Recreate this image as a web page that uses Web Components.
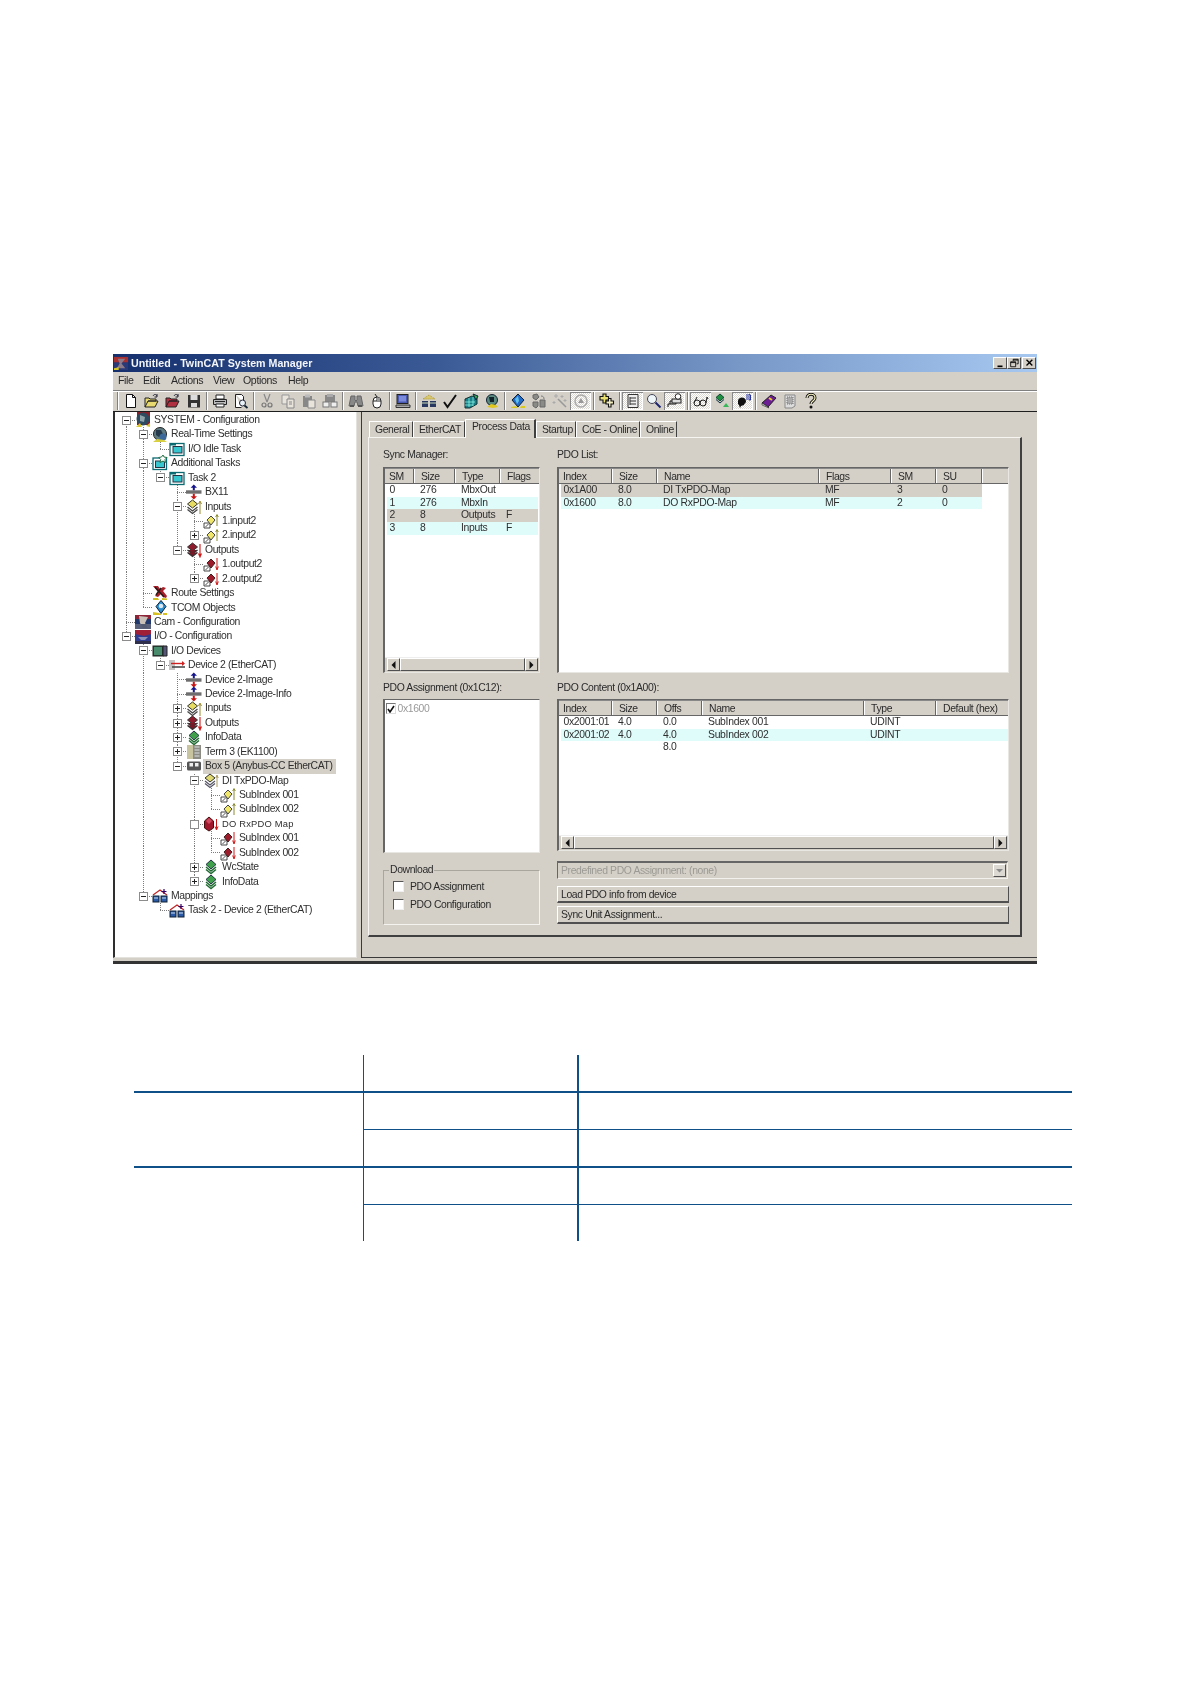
<!DOCTYPE html>
<html><head><meta charset="utf-8"><title>TwinCAT System Manager</title>
<style>
html,body{margin:0;background:#fff}
body{padding:354px 0 0 113px;font:10.4px "Liberation Sans",Arial,sans-serif;letter-spacing:-.37px;color:#2b2b2b}
</style></head><body>
<tc-window>
  <tc-tree slot="tree"></tc-tree>
  <tc-tabs slot="tabs" items="General:44,EtherCAT:52,*Process Data:71,Startup:40,CoE - Online:64,Online:37"></tc-tabs>
  <tc-panel slot="panel">
    <tc-column slot="left">
      <tc-label h="29" pb="6">Sync Manager:</tc-label>
      <tc-listview h="206" cols="29px 41px 45px 40px" rowcols="27px 41px 45px 38px" >
        <tc-lvrow cells="0|276|MbxOut|"></tc-lvrow>
        <tc-lvrow tone="cyan" cells="1|276|MbxIn|"></tc-lvrow>
        <tc-lvrow tone="grey" cells="2|8|Outputs|F"></tc-lvrow>
        <tc-lvrow tone="cyan" cells="3|8|Inputs|F"></tc-lvrow>
        <tc-hscroll slot="scroll"></tc-hscroll>
      </tc-listview>
      <tc-label h="26" pb="5">PDO Assignment (0x1C12):</tc-label>
      <tc-assign></tc-assign>
      <tc-group>
        <tc-check label="PDO Assignment"></tc-check>
        <tc-check label="PDO Configuration"></tc-check>
      </tc-group>
    </tc-column>
    <tc-column slot="right">
      <tc-label h="29" pb="6">PDO List:</tc-label>
      <tc-listview h="206" cols="53px 45px 162px 72px 45px 46px 27px" rowcols="51px 45px 162px 72px 45px 46px" head="Index|Size|Name|Flags|SM|SU|">
        <tc-lvrow tone="grey" cells="0x1A00|8.0|DI TxPDO-Map|MF|3|0"></tc-lvrow>
        <tc-lvrow tone="cyan" cells="0x1600|8.0|DO RxPDO-Map|MF|2|0"></tc-lvrow>
      </tc-listview>
      <tc-label h="26" pb="5">PDO Content (0x1A00):</tc-label>
      <tc-listview h="152" cols="53px 45px 45px 162px 72px 73px" rowcols="51px 45px 45px 162px 72px 73px" head="Index|Size|Offs|Name|Type|Default (hex)">
        <tc-lvrow cells="0x2001:01|4.0|0.0|SubIndex 001|UDINT|"></tc-lvrow>
        <tc-lvrow tone="cyan" cells="0x2001:02|4.0|4.0|SubIndex 002|UDINT|"></tc-lvrow>
        <tc-lvrow cells="||8.0|||"></tc-lvrow>
        <tc-hscroll slot="scroll"></tc-hscroll>
      </tc-listview>
      <tc-combo>Predefined PDO Assignment: (none)</tc-combo>
      <tc-button top="7" h="17">Load PDO info from device</tc-button>
      <tc-button top="3" h="18">Sync Unit Assignment...</tc-button>
    </tc-column>
  </tc-panel>
</tc-window>
<tc-bluegrid></tc-bluegrid>
<script>
const FACE='#d4d0c8';
const page='<path d="M1 10h6v5H1z" fill="#fff" stroke="#333" stroke-width=".9"/><path d="M2.500 14l3-3" stroke="#222" stroke-width=".8"/>';
const ICONS={
 sys:'<rect x="2" y="0" width="13" height="13" fill="#8a1f2a"/><circle cx="8" cy="7" r="6.500" fill="#2d4a5e"/><path d="M5 3l5 2-1 5-4-1z" fill="#8fa3ab"/><path d="M1 15l4-4 2 4zM11 14l4-3v4z" fill="#d8c832"/>',
 gear:'<circle cx="8" cy="7" r="6.500" fill="#5d7a80" stroke="#222"/><path d="M4 3h5l2 4-4 3-3-2z" fill="#253a4a"/><circle cx="11" cy="10" r="3.500" fill="#3b6a9a"/><path d="M1 15l4-3 7 1 3 2z" fill="#d8d040"/>',
 task:'<rect x="1" y="2.500" width="14" height="12" fill="#fff" stroke="#0b6a72" stroke-width="1.300"/><rect x="4" y="5.500" width="9" height="6.500" fill="#36c6d0" stroke="#234"/><path d="M1 2.500h6v2H1z" fill="#0b6a72"/>',
 addt:'<rect x="1" y="3" width="13.500" height="11.500" fill="#fff" stroke="#0b6a72" stroke-width="1.300"/><rect x="3.500" y="6" width="9" height="6.500" fill="#36c6d0" stroke="#234"/><path d="M11 0l1 2 3 .5-2 2 .5 3-2.500-1.500L8 7.500l.7-3-2-2L9.500 2z" fill="#fff" stroke="#163" stroke-width=".9"/>',
 vars:'<rect x="0" y="6.300" width="15.500" height="3.400" fill="#6e6e6e"/><path d="M7.800 .5l3.200 3.200H8.800v2.600h-2V3.700H4.600z" fill="#14148c"/><path d="M7.800 15.500l3.200-3.200H8.800V9.700h-2v2.600H4.600z" fill="#c81414"/>',
 inp:'<path d="M6.500 1l5 4-5 4-5-4z" fill="#e6dc64" stroke="#333"/><path d="M1.500 8l5 4 5-4M1.500 10.500l5 4 5-4" fill="none" stroke="#444" stroke-width="1.300"/><path d="M14 15V3M12.500 5L14 2l1.500 3" fill="none" stroke="#9a8a30" stroke-width="1"/>',
 in1:page+'<path d="M8 3l4 4-4 5-4-5z" fill="#efe66a" stroke="#444"/><path d="M14 13V2M12.700 4L14 1.500 15.300 4" fill="none" stroke="#8a8a30"/>',
 out:'<path d="M6.500 1l5 4-5 4-5-4z" fill="#8e1c2c" stroke="#333"/><path d="M1.500 8l5 4 5-4" fill="#7a1826" stroke="#333" stroke-width="1.300"/><path d="M1.500 10.500l5 4 5-4" fill="#7a1826" stroke="#333" stroke-width="1.300"/><path d="M14 2v12M12.500 11.500L14 15l1.500-3.500" fill="none" stroke="#d01818" stroke-width="1.100"/>',
 out1:page+'<path d="M8 3l4 4-4 5-4-5z" fill="#9c1c2c" stroke="#422"/><path d="M14 2v11M12.700 10.500L14 14l1.300-3.500" fill="none" stroke="#d01818"/>',
 route:'<path d="M1 1h5l2 3 3-2 3 1-3 3 4 5-1 2-3-1-2-3-3 3-3-1 3-4z" fill="#a8202a"/><path d="M3 2l9 10M9 3l-5 7" stroke="#2a1a1a" stroke-width="1.500"/><path d="M1 13h5l1 2H1zM10 13l5 .5v1.500h-5z" fill="#d0c020"/>',
 tcom:'<path d="M9 .5l5 6-5 7-5-7z" fill="#2a8ed0" stroke="#123"/><circle cx="9" cy="6" r="2.200" fill="#dfe8f0"/><path d="M1 12l6 1 3 2H1zM11 13h4v2h-4z" fill="#d8c020"/>',
 cam:'<rect x="0" y="1" width="16" height="4" fill="#8e2438"/><rect x="0" y="5" width="16" height="5" fill="#20386c"/><path d="M4 2l9 1-3 6 3 5H8L5 9z" fill="#c9c0b8"/><rect x="0" y="10" width="16" height="5" fill="#46506a" fill-opacity=".9"/>',
 io:'<rect x="0" y="1" width="16" height="14" fill="#303c90"/><path d="M0 1h16v4L9 7 0 5z" fill="#a02038"/><path d="M3 8h10l-3 3H6z" fill="#8a90b8"/><path d="M0 12h16v3H0z" fill="#30304c"/>',
 iodev:'<rect x="1" y="3" width="10" height="10" fill="#1e4e3a" stroke="#222"/><path d="M2 5h8M2 7h8M2 9h8M2 11h8" stroke="#9fc" stroke-width=".7"/><path d="M11 3h4v10h-4z" fill="#557" stroke="#222"/>',
 dev:'<rect x="0" y="3" width="6" height="10" fill="#c9c4c4"/><path d="M2 6.500h13" stroke="#d02020" stroke-width="1.400"/><path d="M13 4l3 2.500-3 2.500z" fill="#d02020"/><path d="M3 10h13" stroke="#404040" stroke-width="1.500"/>',
 green:'<path d="M8 1l5 4.500L8 10 3 5.500z" fill="#3fa04c" stroke="#234"/><path d="M3 8l5 4 5-4M3 10.500l5 4 5-4" fill="none" stroke="#1e6a30" stroke-width="1.500"/>',
 term:'<rect x="1" y="1" width="6" height="14" fill="#c8c4a0"/><rect x="7" y="1" width="8" height="14" fill="#8c8c84"/><path d="M8.500 3h5M8.500 6h5M8.500 9h5M8.500 12h5" stroke="#ddd" stroke-width="1.200"/>',
 box:'<rect x="1" y="3.500" width="14" height="9" rx="1.500" fill="#555"/><rect x="3.500" y="5" width="3.500" height="3.500" fill="#eee"/><rect x="9" y="5" width="3.500" height="3.500" fill="#eee"/>',
 dim:'<path d="M7 1l5 4-5 4-5-4z" fill="#e0d870" stroke="#333"/><path d="M2 8l5 4 5-4M2 10.500l5 4 5-4" fill="none" stroke="#556" stroke-width="1.300"/><path d="M14 14V3M12.800 5L14 2l1.200 3" fill="none" stroke="#aa9a60"/>',
 dom:'<path d="M6 1l4.500 4v7L6 15l-4.500-3V5z" fill="#a0182c" stroke="#411"/><path d="M6 2l3 3-3 3-3-3z" fill="#d04a60"/><path d="M13.500 3v10M12 10.500l1.500 3.500 1.500-3.500" fill="none" stroke="#d01818"/>',
 map:'<path d="M1 7L8 2l7 5" fill="none" stroke="#c02828" stroke-width="1.300"/><rect x="1" y="8" width="6" height="6" fill="#2a5aa8" stroke="#123"/><rect x="9" y="8" width="6" height="6" fill="#2a5aa8" stroke="#123"/><path d="M2 10h4M10 10h4" stroke="#cde" /><path d="M12 1v5M9.500 3.500h5" stroke="#306" stroke-width="1.200"/>',
 title:'<rect x="0" y="1" width="15" height="6" fill="#a83030"/><rect x="0" y="7" width="15" height="8" fill="#2a3a78"/><path d="M4 3h8L8 8l4 5H3l3-5z" fill="#8a7a8a"/><path d="M0 13l5-1v3H0z" fill="#d8c820"/>',
 new:'<path d="M3.500 1.500h6l3 3v10h-9z" fill="#fff" stroke="#111"/><path d="M9.500 1.500v3h3" fill="none" stroke="#111"/>',
 open:'<path d="M1 14V5h4l1 1h6v2H4l-3 6zm0 0h10l3-6H4" fill="#e8d870" stroke="#222"/><path d="M9 3c1-2 3-2 4 0M13 1v3h-2.500" fill="none" stroke="#223"/>',
 open2:'<path d="M1 14V5h4l1 1h6v2H4l-3 6zm0 0h10l3-6H4" fill="#b03040" stroke="#222"/><path d="M9 3c1-2 3-2 4 0M13 1v3h-2.500" fill="none" stroke="#223"/>',
 save:'<path d="M2 2h12v12.500H2z" fill="#333"/><rect x="4.500" y="2" width="7" height="5" fill="#ddd"/><rect x="5" y="10" width="6" height="4" fill="#ddd"/>',
 print:'<path d="M4 2h8v4H4z" fill="#fff" stroke="#222"/><path d="M1.500 6.500h13v5h-13z" fill="#bbb" stroke="#222"/><path d="M4 11h8v3H4z" fill="#fff" stroke="#222"/><path d="M3 8.500h10" stroke="#222"/>',
 prev:'<path d="M2.500 1.500h6l2 2V9M2.500 1.500V14.500h6" fill="#fff" stroke="#222"/><circle cx="9.500" cy="10" r="3" fill="#e8f2f6" stroke="#223"/><path d="M11.500 12.500l3 2.500" stroke="#123" stroke-width="1.800"/>',
 cut:'<path d="M5 1l3 8M11 1L8 9" stroke="#888" stroke-width="1.200" fill="none"/><circle cx="5" cy="12" r="2" fill="none" stroke="#777" stroke-width="1.200"/><circle cx="11" cy="12" r="2" fill="none" stroke="#777" stroke-width="1.200"/>',
 copy:'<path d="M2 2h7v9H2z" fill="#e8e4dc" stroke="#999"/><path d="M7 6h7v9H7z" fill="#e8e4dc" stroke="#888"/><path d="M9 9h3M9 11h3" stroke="#888"/>',
 paste:'<path d="M2 3h9v11H2z" fill="#888"/><path d="M4 1.500h5v3H4z" fill="#bbb"/><path d="M7 7h7v8H7z" fill="#e8e4dc" stroke="#888"/>',
 paste2:'<path d="M3 2h10v7H3z" fill="#888"/><path d="M5 1h6v3H5z" fill="#aaa"/><rect x="1" y="9" width="6" height="5" fill="#eee" stroke="#777"/><rect x="9" y="9" width="6" height="5" fill="#eee" stroke="#777"/>',
 bino:'<path d="M3 3h4v4l1 1 1-1V3h4l2 10H10l-1-4H7l-1 4H1z" fill="#888" stroke="#666"/><path d="M2 13h4M10 13h4" stroke="#555" stroke-width="2"/>',
 mouse:'<rect x="4" y="4" width="8" height="11" rx="4" fill="#fff" stroke="#222"/><path d="M8 4v4M4 8h8M6 1l2 3" stroke="#222" fill="none"/><path d="M8 4.500h3v3.500H8z" fill="#999"/>',
 mon:'<rect x="2" y="1.500" width="11" height="9" fill="#4a5ab0" stroke="#222"/><rect x="4" y="3" width="7" height="5.500" fill="#7c8adc"/><path d="M1 12h14v2.500H1z" fill="#aaa" stroke="#333"/>',
 conf:'<path d="M2 6l6-4 6 4z" fill="#d8c870" stroke="#b09a30" stroke-dasharray="1 1"/><rect x="1" y="8" width="6" height="6" fill="#27375f"/><rect x="9" y="8" width="6" height="6" fill="#27375f"/><path d="M1 10h6M9 10h6" stroke="#cdb" />',
 check:'<path d="M2 9l3.500 5L14 2" fill="none" stroke="#111" stroke-width="2"/>',
 cube:'<path d="M2 6l7-3 5 2v6l-7 4H2z" fill="#1a7e88" stroke="#133"/><path d="M2 9h10M2 12h8M6 5v9M10 4v9" stroke="#9fe" stroke-width=".7"/><path d="M10 1l5 2-2 4z" fill="#3a5" stroke="#123"/>',
 head:'<circle cx="8" cy="7" r="5.500" fill="#5a8a80" stroke="#123"/><path d="M5 4h5v5H6z" fill="#10222a"/><path d="M3 14l4-3 5 1 2 2-5 1z" fill="#e0c820"/>',
 dia:'<path d="M8 1l6 6-6 7-6-7z" fill="#1e6ac8" stroke="#123"/><path d="M5 6l3-3 1 5-2 3z" fill="#63c0e8"/><path d="M1 14l5-1 2 2H1zM11 13h4v2h-5z" fill="#d8c820"/>',
 gdoc:'<path d="M2 2l4-1 2 3-3 3-3-2zM9 7h5v7H9zM2 9h5v4l-2 2-3-2z" fill="#8a8a86" stroke="#666"/><path d="M10 3c2 0 3 1 3 3" stroke="#777" fill="none"/>',
 wand:'<path d="M14 14L6 6" stroke="#999" stroke-width="1.600"/><path d="M4 1v4M2 3h4M10 2v3M8.500 3.500h3M2 8v3M.5 9.500h3M13 6v3M11.500 7.500h3" stroke="#aaa" />',
 circ:'<circle cx="8" cy="8" r="6" fill="none" stroke="#aaa" stroke-width="1.500"/><path d="M5 10l3-5 3 5z" fill="#999"/>',
 plus:'<path d="M4 1h3v2.500h2.500V7H7v3H4V7H1V3.500h3z" fill="#e8e070" stroke="#111" stroke-width="1.100"/><path d="M9.500 5.500h2.500V8h2.500v3H12v3H9.500v-3H7V8h2.500z" fill="#f4f0c0" stroke="#111" stroke-width="1.100"/>',
 list:'<path d="M3 1.500h10v13H3z" fill="#eee" stroke="#333"/><path d="M5 5h6M5 8h6M5 11h6M5 4v8" stroke="#333"/>',
 find:'<circle cx="6" cy="6" r="4.500" fill="#eef6fa" stroke="#445"/><path d="M9.500 9.500l5 5" stroke="#1c2470" stroke-width="2"/>',
 conn:'<path d="M1 14v-3h2V8h6v3H3" fill="none" stroke="#111"/><rect x="5" y="6" width="9" height="4" fill="#ddd" stroke="#222"/><circle cx="11" cy="3.500" r="2.800" fill="#fff" stroke="#222"/>',
 glass:'<circle cx="4" cy="10" r="3" fill="none" stroke="#222"/><circle cx="10" cy="10" r="3" fill="none" stroke="#222"/><path d="M1 10L4 4M13 10l1-6 1 2M7 10h0" fill="none" stroke="#222"/>',
 gdi:'<path d="M6 1l4 3.500L6 8 2 4.500z" fill="#1e9040" stroke="#143"/><path d="M2 6.500l4 3.500 4-3.500" fill="none" stroke="#134" /><path d="M12 10l3 4H9z" fill="#38b858"/>',
 ear:'<path d="M3 8c0-4 7-5 8 0 0 3-2 2-2 4l-3 1-1 2-1-3-1-1z" fill="#111"/><path d="M12 1v6M14 1v6M14 1l1.500 1v5h-1.500" fill="none" stroke="#2632a0"/>',
 book:'<path d="M1 10l9-8 5 3-8 9z" fill="#6a1e92" stroke="#222"/><path d="M1 10l6 4 1 1-7-3z" fill="#ddd" stroke="#222" stroke-width=".6"/><path d="M8 5l3 2" stroke="#e8c830" stroke-width="2"/>',
 gbox:'<path d="M3 2h10v11l-3 2H3z" fill="#dcdcdc" stroke="#888"/><path d="M5 4h6v7H5z" fill="#aaa" stroke="#777" stroke-dasharray="1 1"/>',
 ques:'<path d="M4 5c0-5 8-5 8 0 0 3-4 3-4 6" fill="none" stroke="#111" stroke-width="3"/><path d="M4 5c0-5 8-5 8 0 0 3-4 3-4 6" fill="none" stroke="#f4f0c0" stroke-width="1.200"/><circle cx="8" cy="14" r="1.500" fill="#111"/>',
 min:'<path d="M3 9h6v2H3z" fill="#000"/>',
 max:'<path d="M5 1.500h6v5.500H9M5 1.500v2M5 2.500h6M2 4.500h6v6H2zM2 5.500h6" fill="none" stroke="#000"/>',
 close:'<path d="M3 2l7 7M10 2l-7 7" stroke="#000" stroke-width="1.600"/>'
};
function def(name,cls){customElements.define(name,cls)}
function shadow(el,html){const r=el.attachShadow({mode:'open'});r.innerHTML=html;return r}
const raised='border:1px solid;border-color:#fff #505050 #505050 #fff;';

def('tc-icon',class extends HTMLElement{connectedCallback(){
  const s=+this.getAttribute('size')||15,n=this.getAttribute('name');
  if(!this.shadowRoot)shadow(this,`<style>:host{display:inline-flex;width:${s}px;height:${s}px;flex:none}svg{width:100%;height:100%;display:block}</style><svg viewBox="0 0 16 16">${ICONS[n]||''}</svg>`);
}});

def('tc-window',class extends HTMLElement{constructor(){super();shadow(this,`<style>
:host{display:block;width:924px;height:610px;background:${FACE};filter:blur(.3px)}
.wrap{display:flex;flex-direction:column;height:100%}
.panes{display:flex;height:546px;flex:none}
.treebox{width:241px;flex:none;background:#fff;border-left:2px solid #2e2e2e;border-right:1px solid #e4e2dc;border-bottom:1px solid #e4e2dc;height:545px;overflow:hidden}
.rightbox{margin-left:4px;flex:1;border-left:1px solid #3a3a3a;border-bottom:1px solid #3a3a3a;box-sizing:border-box;padding:7px 0 0 6px;display:flex;flex-direction:column}
.foot{height:3px;flex:none}
.bar{height:3px;background:#333;flex:none}
</style><div class="wrap"><tc-titlebar>Untitled - TwinCAT System Manager</tc-titlebar><tc-menubar></tc-menubar><tc-toolbar></tc-toolbar>
<div class="panes"><div class="treebox"><slot name="tree"></slot></div><div class="rightbox"><slot name="tabs"></slot><slot name="panel"></slot></div></div><div class="foot"></div><div class="bar"></div></div>`)}});

def('tc-titlebar',class extends HTMLElement{constructor(){super();shadow(this,`<style>
:host{display:flex;align-items:center;height:18px;flex:none;background:linear-gradient(90deg,#16306e 0%,#3a5a96 35%,#7898c8 68%,#a6c8f0 100%);color:#fff;font:bold 10.66px "Liberation Sans",Arial,sans-serif;letter-spacing:0;box-sizing:border-box;padding:0 1px}
.t{flex:1;padding-left:2px;color:#f4f6fa;white-space:nowrap}
b{width:14px;height:12px;background:${FACE};${raised}box-sizing:border-box;display:flex;align-items:center;justify-content:center}
svg{width:12px;height:10px}
.b{display:flex}.b b:last-child{margin-left:1px}
</style><tc-icon name="title" size="15"></tc-icon><span class="t"><slot></slot></span><span class="b">
<b><svg viewBox="0 0 12 12">${ICONS.min}</svg></b><b><svg viewBox="0 0 12 12">${ICONS.max}</svg></b><b><svg viewBox="0 0 12 12">${ICONS.close}</svg></b></span>`)}});

def('tc-menubar',class extends HTMLElement{constructor(){super();
 const items=[['File',25],['Edit',28],['Actions',42],['View',30],['Options',45],['Help',30]];
 shadow(this,`<style>:host{display:flex;align-items:center;height:18px;flex:none;padding:0 0 2px 5px;box-sizing:border-box;font-size:10.600px;color:#2a2a2a}span{display:block;flex:none}</style>`+items.map(i=>`<span style="width:${i[1]}px">${i[0]}</span>`).join(''))}});

def('tc-toolbar',class extends HTMLElement{constructor(){super();
 const L='| new open open2 save | print prev | cut copy paste paste2 | bino mouse | mon | conf check cube head | dia gdoc wand circ* | plus | list* find conn* | glass* gdi ear* | book gbox ques'.split(' ');
 shadow(this,`<style>:host{display:flex;align-items:center;height:22px;flex:none;box-sizing:border-box;border-top:1px solid #808080;box-shadow:inset 0 1px 0 #fff;border-bottom:1px solid #1e1e1e;padding:1px 0 2px 2px}
 i{display:block;width:5px;height:18px;flex:none;background:linear-gradient(90deg,transparent 2px,#808080 2px,#808080 3px,#fff 3px,#fff 4px,transparent 4px)}
 span{display:flex;width:21px;height:18px;flex:none;align-items:center;justify-content:center}
 span.on{background:#eeece8 repeating-conic-gradient(#fff 0 25%,#dcd9d2 0 50%) 0 0/2px 2px;box-shadow:inset 1px 1px 0 #888,inset -1px -1px 0 #fff}
 </style>`+L.map(n=>n==='|'?'<i></i>':`<span class="${n.endsWith('*')?'on':''}"><tc-icon name="${n.replace('*','')}" size="16"></tc-icon></span>`).join(''))}});

const TREE=[
[0,'-','sys','SYSTEM - Configuration'],[1,'-','gear','Real-Time Settings'],[2,'','task','I/O Idle Task'],[1,'-','addt','Additional Tasks'],[2,'-','task','Task 2'],[3,'','vars','BX11'],[3,'-','inp','Inputs'],[4,'','in1','1.input2'],[4,'+','in1','2.input2'],[3,'-','out','Outputs'],[4,'','out1','1.output2'],[4,'+','out1','2.output2'],[1,'','route','Route Settings'],[1,'','tcom','TCOM Objects'],[0,'','cam','Cam - Configuration'],[0,'-','io','I/O - Configuration'],[1,'-','iodev','I/O Devices'],[2,'-','dev','Device 2 (EtherCAT)'],[3,'','vars','Device 2-Image'],[3,'','vars','Device 2-Image-Info'],[3,'+','inp','Inputs'],[3,'+','out','Outputs'],[3,'+','green','InfoData'],[3,'+','term','Term 3 (EK1100)'],[3,'-','box','Box 5 (Anybus-CC EtherCAT)','sel'],[4,'-','dim','DI TxPDO-Map'],[5,'','in1','SubIndex 001'],[5,'','in1','SubIndex 002'],[4,'o','dom','DO RxPDO Map','thin'],[5,'','out1','SubIndex 001'],[5,'','out1','SubIndex 002'],[4,'+','green','WcState'],[4,'+','green','InfoData'],[1,'-','map','Mappings'],[2,'','map','Task 2 - Device 2 (EtherCAT)']];
def('tc-tree',class extends HTMLElement{constructor(){super();
 const dot='repeating-linear-gradient(to bottom,#7c7c7c 0 1px,transparent 1px 2px)';
 const hdot='repeating-linear-gradient(to right,#7c7c7c 0 1px,transparent 1px 2px)';
 const later=(i,d)=>{for(let j=i+1;j<TREE.length;j++){if(TREE[j][0]<d)return false;if(TREE[j][0]===d)return true}return false};
 const rows=TREE.map((r,i)=>{const d=r[0];let cells='';
  let anc=[];let cur=i;for(let l=d-1;l>=0;l--){let j=cur;while(TREE[j][0]>l)j--;anc[l]=j;cur=j}
  for(let l=0;l<d;l++)cells+=`<u class="${later(anc[l],l)?'v':''}"></u>`;
  const more=later(i,d);
  cells+=`<u class="${more?'t':'l'}${i===0?' first':''}">${r[1]?`<em class="${r[1]==='+'?'p':r[1]==='-'?'m':''}"></em>`:''}</u>`;
  return `<div class="r"><div class="g">${cells}</div><tc-icon name="${r[2]}" size="16"></tc-icon><span class="${r[4]||''}">${r[3]}</span></div>`}).join('');
 shadow(this,`<style>:host{display:block;padding:1px 0 0 2.500px}
 .r{display:flex;align-items:center;height:14.430px;white-space:nowrap;color:#2f2f2f}
 .g{display:flex;height:100%;flex:none}
 u{display:flex;width:17px;height:100%;flex:none;align-items:center;justify-content:center;text-decoration:none;background-repeat:no-repeat}
 u.v{background-image:${dot};background-size:1px 100%;background-position:8px 0}
 u.t{background-image:${dot},${hdot};background-size:1px 100%,9px 1px;background-position:8px 0,8px 50%}
 u.t.first{background-size:1px 50%,9px 1px;background-position:8px 100%,8px 50%}
 u.l{background-image:${dot},${hdot};background-size:1px 50%,9px 1px;background-position:8px 0,8px 50%}
 em{display:block;width:9px;height:9px;box-sizing:border-box;border:1px solid #8c8c8c;background-color:#fff;background-repeat:no-repeat}
 em.m{background-image:linear-gradient(#222,#222);background-size:5px 1px;background-position:1px 3px}
 em.p{background-image:linear-gradient(#222,#222),linear-gradient(#222,#222);background-size:5px 1px,1px 5px;background-position:1px 3px,3px 1px}
 tc-icon{margin:0 .5px}
 span{padding:0 3px 0 2.500px;line-height:14.400px;height:14.400px}
 .sel{background:${FACE};padding-left:2px;margin-left:.5px}
 .thin{font-size:9.400px;letter-spacing:.2px}
 </style>${rows}`)}});

def('tc-tabs',class extends HTMLElement{connectedCallback(){if(this.shadowRoot)return;
 const html=this.getAttribute('items').match(/[^,]+/g).map(x=>{const k=x.lastIndexOf(':');const n=x.slice(0,k),w=x.slice(k+1);const on=n[0]==='*';return `<div class="${on?'on':''}" style="width:${w}px">${n.replace('*','')}</div>`}).join('');
 shadow(this,`<style>:host{display:flex;align-items:flex-end;height:18px;flex:none;padding-left:1px;box-sizing:border-box}
 div{box-sizing:border-box;height:16px;line-height:15px;padding-left:5px;flex:none;border-left:1px solid #fff;border-top:1px solid #fff;border-right:1px solid #404040;white-space:nowrap}
 .on{height:19px;line-height:13px;padding:0 0 3px 6px;margin-bottom:-1px;background:${FACE};position:relative;z-index:1;border-right:2px solid #404040}
 </style>${html}`)}});

def('tc-panel',class extends HTMLElement{constructor(){super();shadow(this,`<style>:host{display:grid;grid-template-columns:157px 452px;column-gap:17px;width:654px;height:500px;box-sizing:border-box;border:1px solid;border-color:#f6f5f2 #404040 #404040 #f6f5f2;border-width:1px 2px 2px 1px;padding:0 0 0 14px}</style><slot name="left"></slot><slot name="right"></slot>`)}});
def('tc-column',class extends HTMLElement{constructor(){super();shadow(this,`<style>:host{display:flex;flex-direction:column;min-width:0}</style><slot></slot>`)}});
def('tc-label',class extends HTMLElement{connectedCallback(){if(this.shadowRoot)return;
 shadow(this,`<style>:host{display:flex;align-items:flex-end;height:${this.getAttribute('h')}px;padding-bottom:${this.getAttribute('pb')}px;box-sizing:border-box;flex:none;line-height:12px;white-space:nowrap}</style><slot></slot>`)}});

def('tc-listview',class extends HTMLElement{connectedCallback(){if(this.shadowRoot)return;
 const head=(this.getAttribute('head')||'SM|Size|Type|Flags').split('|');
 this.style.setProperty('--rowcols',this.getAttribute('rowcols'));
 shadow(this,`<style>:host{display:flex;flex-direction:column;height:${this.getAttribute('h')}px;flex:none;background:#fff;box-sizing:border-box;border:1px solid;border-color:#666 #e9e7e2 #e9e7e2 #666;border-width:1px 1px 1px 2px;overflow:hidden}
 .h{display:grid;grid-template-columns:${this.getAttribute('cols')};height:16px;flex:none;background:${FACE};border-bottom:1px solid #666;border-top:1px solid #888;box-sizing:border-box;line-height:15px}
 .h span{box-sizing:border-box;padding-left:6px;border-right:1px solid #666;border-left:1px solid #fff;white-space:nowrap;overflow:hidden}
 .h span:first-child{border-left:0;padding-left:4px}.h span:last-child{border-right:0}
 .b{flex:1;min-height:0}
 </style><div class="h">${head.map(x=>`<span>${x}</span>`).join('')}</div><div class="b"><slot></slot></div><slot name="scroll"></slot>`)}});

def('tc-lvrow',class extends HTMLElement{connectedCallback(){if(this.shadowRoot)return;
 const t=this.getAttribute('tone');const bg=t==='cyan'?'#dffcfb':t==='grey'?FACE:'transparent';
 const c=this.getAttribute('cells').split('|');
 shadow(this,`<style>:host{display:grid;grid-template-columns:var(--rowcols);justify-content:start;height:12.700px;line-height:12.700px;margin-left:2px;background:${bg};width:max-content;color:#2f2f2f}
 span{padding-left:6px;white-space:nowrap;overflow:hidden;letter-spacing:-.3px}span:first-of-type{padding-left:2.500px}</style>${c.map(x=>`<span>${x}</span>`).join('')}`)}});

def('tc-hscroll',class extends HTMLElement{constructor(){super();const btn=(d)=>`<b><svg width="5" height="8" viewBox="0 0 5 8"><path d="${d}" fill="#111"/></svg></b>`;
 shadow(this,`<style>:host{display:flex;height:15px;flex:none;background:${FACE};box-sizing:border-box;padding:0 0 1px 2px;border-top:1px solid #eee}
 b{display:flex;width:13px;height:13px;align-items:center;justify-content:center;box-sizing:border-box;${raised}flex:none}
 i{display:block;flex:1;${raised}box-sizing:border-box}
 </style>${btn('M4.500 0v8L.5 4z')}<i></i>${btn('M.5 0v8l4-4z')}<span style="width:1px"></span>`)}});

def('tc-assign',class extends HTMLElement{constructor(){super();shadow(this,`<style>:host{display:block;height:154px;flex:none;background:#fff;box-sizing:border-box;border:1px solid;border-color:#666 #e9e7e2 #e9e7e2 #666;border-width:1px 1px 1px 2px;padding:3px 0 0 1px}
 .r{display:flex;align-items:center;height:11px;gap:1.500px;color:#9a9a9a}
 b{display:flex;width:10px;height:11px;border:1px solid #777;box-sizing:border-box;border-right-color:#ddd;border-bottom-color:#ddd;align-items:center;justify-content:center}
 </style><div class="r"><b><svg width="8" height="8" viewBox="0 0 8 8"><path d="M1 4l2 3 4-6" fill="none" stroke="#111" stroke-width="1.600"/></svg></b><span>0x1600</span></div>`)}});

def('tc-group',class extends HTMLElement{constructor(){super();shadow(this,`<style>:host{display:block;margin-top:11px;flex:none}
 fieldset{margin:0;box-sizing:border-box;height:61px;border:1px solid;border-color:#a9a69e #f4f3ef #f4f3ef #a9a69e;padding:5px 0 0 9px;display:flex;flex-direction:column;gap:7px}
 legend{padding:0 1px;margin-left:-4px;height:12px;line-height:12px}
 </style><fieldset><legend>Download</legend><slot></slot></fieldset>`)}});
def('tc-check',class extends HTMLElement{connectedCallback(){if(this.shadowRoot)return;
 shadow(this,`<style>:host{display:flex;align-items:center;gap:6px;height:11px;line-height:11px}
 b{display:block;width:11px;height:11px;background:#fff;box-sizing:border-box;border:1px solid;border-color:#555 #f0f0f0 #f0f0f0 #555;flex:none}</style><b></b><span>${this.getAttribute('label')}</span>`)}});

def('tc-combo',class extends HTMLElement{constructor(){super();shadow(this,`<style>:host{display:flex;align-items:center;justify-content:space-between;margin-top:10px;height:18px;flex:none;box-sizing:border-box;border:1px solid;border-color:#666 #f2f1ed #f2f1ed #666;border-width:2px 1px 1px 1px;padding:0 1px 0 3px;color:#9c9a94;width:451px}
 b{display:flex;width:13px;height:13px;align-items:center;justify-content:center;box-sizing:border-box;${raised}background:#dcd9d2}</style><span><slot></slot></span><b><svg width="7" height="5" viewBox="0 0 7 5"><path d="M0 1h7L3.500 4.500z" fill="#8a8a8a"/></svg></b>`)}});
def('tc-button',class extends HTMLElement{connectedCallback(){if(this.shadowRoot)return;
 shadow(this,`<style>:host{display:flex;align-items:center;margin-top:${this.getAttribute('top')}px;height:${this.getAttribute('h')}px;flex:none;box-sizing:border-box;${raised}border-width:1px 1px 2px 1px;padding-left:3px}</style><slot></slot>`)}});

def('tc-bluegrid',class extends HTMLElement{constructor(){super();const C='#0f5089';
 shadow(this,`<style>:host{display:grid;grid-template-columns:230px 215px 493px;grid-template-rows:38px 37px 38px 37px 36px;margin:91px 0 0 21px;width:938px;box-sizing:border-box}
 div{box-sizing:border-box}
 .c1{border-right:1px solid ${C}}.c2{border-right:2px solid ${C}}
 .tk{border-bottom:2px solid ${C}}.tn{border-bottom:1px solid ${C}}
 .s{grid-row:span 2}
 </style>
 <div class="c1 tk"></div><div class="c2 tk"></div><div class="tk"></div>
 <div class="c1 tk s"></div><div class="c2 tn"></div><div class="tn"></div>
 <div class="c2 tk"></div><div class="tk"></div>
 <div class="c1 s"></div><div class="c2 tn"></div><div class="tn"></div>
 <div class="c2"></div><div></div>`)}});
</script>
</body></html>
